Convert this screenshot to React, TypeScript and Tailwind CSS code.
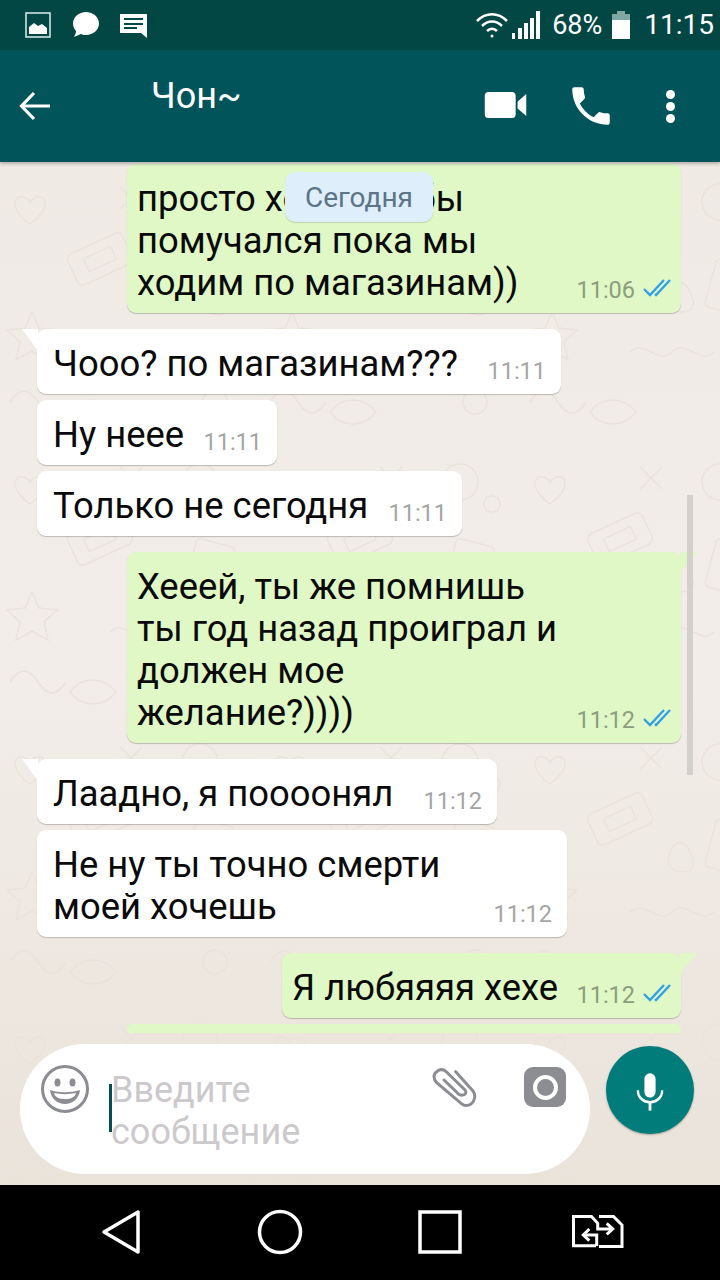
import React from 'react';

const font = { fontFamily: 'Roboto, sans-serif' };

function Ticks() {
  return (
    <svg width="28" height="18" viewBox="0 0 28 18" fill="none" stroke="#2f9fe8" strokeWidth="2.300" className="ml-[8px] mb-[7px] shrink-0">
      <path d="M1 10l6 6L21 1" />
      <path d="M12 15l1 1L27 1" />
    </svg>
  );
}

function Wallpaper() {
  return (
    <svg className="absolute inset-0 h-full w-full" xmlns="http://www.w3.org/2000/svg">
      <defs>
        <pattern id="doodles" width="260" height="280" patternUnits="userSpaceOnUse">
          <g fill="none" stroke="#e9e3dc" strokeWidth="1.500">
            <path d="M30 40c-10-14-28 2 0 22c28-20 10-36 0-22z" />
            <rect x="70" y="80" width="60" height="34" rx="6" transform="rotate(-25 100 97)" />
            <rect x="85" y="90" width="30" height="14" rx="2" transform="rotate(-25 100 97)" />
            <circle cx="200" cy="40" r="18" />
            <circle cx="232" cy="62" r="8" />
            <path d="M32 150l7 16 18 2-13 12 4 18-16-9-16 9 4-18-13-12 18-2z" />
            <path d="M110 190c14-14 28 14 42 0s28 14 42 0" />
            <rect x="190" y="100" width="40" height="50" rx="5" transform="rotate(15 210 125)" />
            <path d="M70 250c12-16 34-16 46 0-12 16-34 16-46 0z" />
            <circle cx="215" cy="240" r="12" />
            <path d="M120 25l22 22M142 25l-22 22" />
            <path d="M10 240q14-22 28 0t28 0" />
            <path d="M150 130q10-20 20 0t-10 20q-16-4-10-20z" />
          </g>
        </pattern>
      </defs>
      <rect width="100%" height="100%" fill="url(#doodles)" />
    </svg>
  );
}

function Bubble({ mine, tail, time, lines, width }: {
  mine?: boolean;
  tail?: boolean;
  time: string;
  lines: string[];
  width: string;
}) {
  return (
    <div
      className={`relative rounded-[9px] shadow-[0_1px_1px_rgba(0,0,0,0.22)] ${width} pt-[14px] ${mine ? 'self-end mr-[39px] bg-[#dff8c6] pl-[10px] pr-[10px]' : 'self-start ml-[37px] bg-white pl-[16px] pr-[15px]'} pb-[9px] flex items-end justify-between`}
    >
      {tail && !mine && (
        <svg width="16" height="22" viewBox="0 0 16 22" className="absolute left-[-15px] top-0">
          <path d="M0 0H16V22Z" fill="#ffffff" />
        </svg>
      )}
      {tail && mine && (
        <svg width="17" height="20" viewBox="0 0 17 20" className="absolute right-[-16px] top-0">
          <path d="M0 0H17L0 20Z" fill="#dff8c6" />
        </svg>
      )}
      <div className="text-[36.4px] leading-[42px] text-[#0a0a0a] whitespace-nowrap">
        {lines.map((l) => (
          <div key={l}>{l}</div>
        ))}
      </div>
      <div className={`flex items-end ${mine ? 'text-[#8b9e7d]' : 'text-[#a5a5a5]'}`}>
        <span className="text-[23.5px] leading-[28px]">{time}</span>
        {mine && <Ticks />}
      </div>
    </div>
  );
}

export default function App() {
  return (
    <div className="flex h-[1280px] w-[720px] flex-col overflow-hidden bg-black" style={font}>
      {/* status bar */}
      <div className="flex h-[50px] shrink-0 items-center bg-[#034745] text-white">
        <svg width="26" height="26" viewBox="0 0 26 26" className="ml-[25px]">
          <rect x="1" y="1" width="24" height="24" fill="none" stroke="#cfe6e4" strokeWidth="1.600" />
          <path d="M4 22v-7l5-4 4 3 4-2 5 4v6z" fill="#fff" />
        </svg>
        <svg width="28" height="26" viewBox="0 0 28 26" className="ml-[21px]">
          <path d="M14 0c7 0 13 5 13 11.500S21 23 14 23c-2 0-3 0-5-1l-7 3c1-2 2-4 2-6-2-2-3-5-3-7.500C1 5 7 0 14 0z" fill="#fff" />
        </svg>
        <svg width="29" height="25" viewBox="0 0 29 25" className="ml-[19px]">
          <path d="M1 1h27v24l-6-5H1z" fill="#fff" />
          <path d="M5 6h19M5 11h19M5 15h13" stroke="#034745" strokeWidth="1.800" />
        </svg>
        <svg width="34" height="26" viewBox="0 0 34 26" className="ml-auto" fill="none" stroke="#fff" strokeWidth="2.600">
          <path d="M2 9c9-9 21-9 30 0" />
          <path d="M7 14c6-6 14-6 20 0" />
          <path d="M12 19c3-3 7-3 10 0" />
          <circle cx="17" cy="24" r="1.500" fill="#fff" stroke="none" />
        </svg>
        <svg width="30" height="28" viewBox="0 0 30 28" className="ml-[2px]" fill="#fff">
          <rect x="1" y="22" width="3" height="6" />
          <rect x="7" y="17" width="4" height="11" />
          <rect x="13" y="12" width="4" height="16" />
          <rect x="19" y="7" width="4" height="21" />
          <rect x="25" y="0" width="4" height="28" />
        </svg>
        <span className="ml-[11px] text-[27px] leading-none">68%</span>
        <svg width="18" height="28" viewBox="0 0 18 28" className="ml-[10px]">
          <path d="M5 0h8v3h5v25H0V3h5z" fill="#7fa8a4" />
          <rect y="9" width="18" height="19" fill="#fff" />
        </svg>
        <span className="ml-[14px] mr-[6px] text-[28px] leading-none">11:15</span>
      </div>

      {/* toolbar */}
      <div className="z-10 flex h-[112px] shrink-0 items-center bg-[#00545a] shadow-[0_2px_3px_rgba(0,0,0,0.25)]">
        <svg width="32" height="30" viewBox="0 0 32 30" fill="none" stroke="#fff" strokeWidth="3.200" className="ml-[19px]">
          <path d="M31 15H3M15 2L2.500 15 15 28" />
        </svg>
        <span className="ml-[100px] mb-[20px] text-[36px] leading-none text-white">Чон~</span>
        <svg width="44" height="27" viewBox="0 0 44 28" className="ml-auto mb-[2px]" fill="#fff">
          <rect x="0" y="0" width="32" height="27" rx="4" />
          <path d="M34 10l9-8v23l-9-8z" />
        </svg>
        <svg width="50" height="50" viewBox="0 0 24 24" fill="#fff" className="ml-[38px]">
          <path d="M6.620 10.790c1.440 2.830 3.760 5.140 6.590 6.590l2.200-2.200c.27-.27.67-.36 1.020-.24 1.120.37 2.330.57 3.570.57.55 0 1 .45 1 1V20c0 .55-.45 1-1 1-9.390 0-17-7.610-17-17 0-.55.45-1 1-1h3.500c.55 0 1 .45 1 1 0 1.250.2 2.450.57 3.570.11.35.03.74-.25 1.020l-2.200 2.200z" />
        </svg>
        <div className="ml-[50px] mr-[45px] flex flex-col gap-[3px]">
          <div className="h-[9px] w-[9px] rounded-full bg-white" />
          <div className="h-[9px] w-[9px] rounded-full bg-white" />
          <div className="h-[9px] w-[9px] rounded-full bg-white" />
        </div>
      </div>

      {/* conversation */}
      <div className="relative flex h-[1023px] shrink-0 flex-col bg-gradient-to-b from-[#efeae4] via-[#f2ede8] to-[#e9e3da]">
        <Wallpaper />
        <div className="relative flex h-[871px] flex-col overflow-hidden pt-[2px]">
          <Bubble mine width="w-[554px]" lines={['просто хочу что бы', 'помучался пока мы', 'ходим по магазинам))']} time="11:06" />
          <div className="h-[16px] shrink-0" />
          <Bubble tail width="w-[524px]" lines={['Чооо? по магазинам???']} time="11:11" />
          <div className="h-[6px] shrink-0" />
          <Bubble width="w-[240px]" lines={['Ну неее']} time="11:11" />
          <div className="h-[6px] shrink-0" />
          <Bubble width="w-[425px]" lines={['Только не сегодня']} time="11:11" />
          <div className="h-[16px] shrink-0" />
          <Bubble mine tail width="w-[554px]" lines={['Хееей, ты же помнишь', 'ты год назад проиграл и', 'должен мое', 'желание?))))']} time="11:12" />
          <div className="h-[16px] shrink-0" />
          <Bubble tail width="w-[460px]" lines={['Лаадно, я поооонял']} time="11:12" />
          <div className="h-[6px] shrink-0" />
          <Bubble width="w-[530px]" lines={['Не ну ты точно смерти', 'моей хочешь']} time="11:12" />
          <div className="h-[16px] shrink-0" />
          <Bubble mine tail width="w-[399px]" lines={['Я любяяяя хехе']} time="11:12" />
          <div className="h-[6px] shrink-0" />
          <div className="mr-[39px] h-[9px] w-[554px] shrink-0 self-end rounded-t-[9px] rounded-b-[6px] bg-[#dff8c6]" />
          <div className="absolute left-[285px] top-[10px] flex h-[50px] w-[148px] items-center justify-center rounded-[10px] bg-[#deeefb] pt-[2px] text-[28px] text-[#5c7488] shadow-[0_1px_1px_rgba(0,0,0,0.15)]">
            Сегодня
          </div>
          <div className="absolute left-[687px] top-[333px] h-[280px] w-[6px] bg-[#d3cfca]" />
        </div>

        {/* composer */}
        <div className="relative flex flex-1 items-start pl-[20px] pt-[11px]">
          <div className="flex h-[130px] w-[570px] items-start rounded-[65px] bg-white">
            <svg width="48" height="48" viewBox="0 0 48 48" className="ml-[21px] mt-[21px] shrink-0">
              <circle cx="24" cy="24" r="22.500" fill="none" stroke="#8c8d92" strokeWidth="3" />
              <ellipse cx="16.500" cy="17.500" rx="3" ry="4" fill="#8c8d92" />
              <ellipse cx="31.500" cy="17.500" rx="3" ry="4" fill="#8c8d92" />
              <path d="M9 25c9 3 21 3 30 0-1 9-8 14-15 14S10 34 9 25z" fill="#8c8d92" />
              <path d="M13 28c7 1.500 15 1.500 22 0-1 4-5 6-11 6s-10-2-11-6z" fill="#fff" />
            </svg>
            <div className="relative ml-[22px] mt-[25px] w-[300px] text-[36px] leading-[42px] text-[#ccc9cc]">
              <div className="absolute left-[-2px] top-[15px] h-[48px] w-[3px] bg-[#00514f]" />
              <div>Введите</div>
              <div>сообщение</div>
            </div>
            <svg width="46" height="44" viewBox="0 0 46 44" className="ml-[20px] mt-[22px] shrink-0" fill="none" stroke="#8c8d92" strokeWidth="3" strokeLinecap="round">
              <path d="M24.700 5.700L42 25C45 29 44 35 40 38C37 40 33 40 31 38L6 17C2 13 2 8 6 5.500C9 3 12 3 15 5.500L34 24C36 27 34 29 32 29C30 30 27 28 26 26.500L13 14" />
            </svg>
            <div className="ml-[47px] mt-[23px] flex h-[40px] w-[42px] shrink-0 items-center justify-center rounded-[9px] bg-[#8c8d92]">
              <div className="h-[25px] w-[25px] rounded-full border-[4px] border-white" />
            </div>
          </div>
          <div className="ml-[16px] mt-[2px] flex h-[88px] w-[88px] shrink-0 items-center justify-center rounded-full bg-[#017c7b] shadow-[0_1px_2px_rgba(0,0,0,0.3)]">
            <svg width="28" height="38" viewBox="0 0 30 40" fill="none" className="mt-[4px]">
              <rect x="9" y="0" width="12" height="26" rx="6" fill="#fff" />
              <path d="M2 18c0 8 6 13 13 13s13-5 13-13" stroke="#fff" strokeWidth="2.600" />
              <path d="M15 31v9" stroke="#fff" strokeWidth="3" />
            </svg>
          </div>
        </div>
      </div>

      {/* navigation bar */}
      <div className="flex flex-1 items-center bg-black pb-[2px]">
        <svg width="40" height="46" viewBox="0 0 40 46" fill="none" stroke="#fff" strokeWidth="3.500" className="ml-[101px]">
          <path d="M37 3v40L3 23z" strokeLinejoin="round" />
        </svg>
        <svg width="46" height="46" viewBox="0 0 46 46" fill="none" stroke="#fff" strokeWidth="3.500" className="ml-[116px]">
          <circle cx="23" cy="23" r="20.500" />
        </svg>
        <svg width="44" height="44" viewBox="0 0 44 44" fill="none" stroke="#fff" strokeWidth="3.500" className="ml-[115px]">
          <rect x="2" y="2" width="40" height="40" />
        </svg>
        <svg width="52" height="34" viewBox="0 0 52 34" fill="none" stroke="#fff" strokeWidth="3" className="ml-[110px]">
          <path d="M24 30.700H1.500V1.500H19.500L25.700 8.300V14H39.700" />
          <path d="M34.700 8.300L40.700 14L34.700 19.300" />
          <path d="M27 1.500H41.500L50 10V31.500H27" />
          <path d="M24.700 31V20H11.300" />
          <path d="M17.300 14L11.300 20L17.300 25.700" />
        </svg>
      </div>
    </div>
  );
}
